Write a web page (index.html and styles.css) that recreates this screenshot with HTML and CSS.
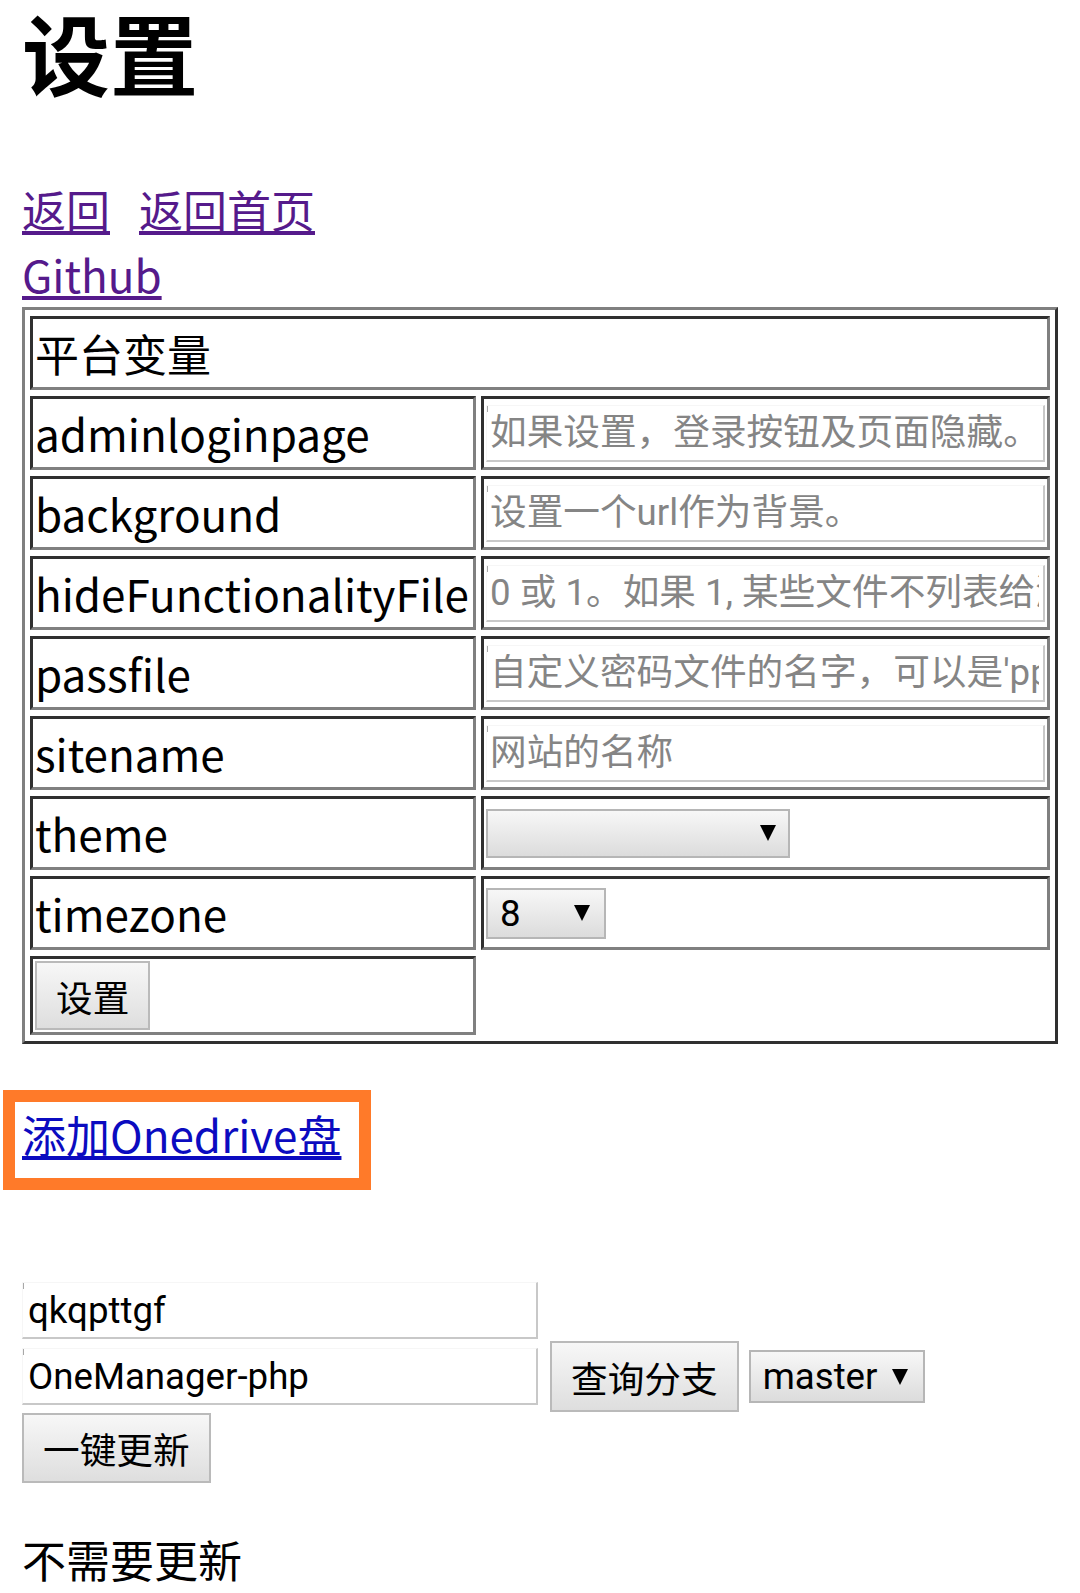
FILE: index.html
```html
<!DOCTYPE html>
<html lang="zh-CN">
<head>
<meta charset="utf-8">
<title>设置</title>
<link rel="stylesheet" href="styles.css">
</head>
<body>
<div class="content">
  <h1 class="title">设置</h1>
  <div class="nav">
    <div class="nav-line"><a class="link link-visited" href="#">返回</a><a class="link link-visited nav-gap" href="#">返回首页</a></div>
    <div class="nav-line"><a class="link link-visited" href="#">Github</a></div>
  </div>
  <table class="settings">
    <colgroup><col class="col-name"><col class="col-value"></colgroup>
    <tr><td colspan="2" class="cell">平台变量</td></tr>
    <tr><td class="cell">adminloginpage</td><td class="cell cell-value"><input class="field" type="text" placeholder="如果设置，登录按钮及页面隐藏。"></td></tr>
    <tr><td class="cell">background</td><td class="cell cell-value"><input class="field" type="text" placeholder="设置一个url作为背景。"></td></tr>
    <tr><td class="cell">hideFunctionalityFile</td><td class="cell cell-value"><input class="field" type="text" placeholder="0 或 1。如果 1, 某些文件不列表给游客。"></td></tr>
    <tr><td class="cell">passfile</td><td class="cell cell-value"><input class="field" type="text" placeholder="自定义密码文件的名字，可以是'pppppp'，也可以是'aaaa.txt'等等。"></td></tr>
    <tr><td class="cell">sitename</td><td class="cell cell-value"><input class="field" type="text" placeholder="网站的名称"></td></tr>
    <tr><td class="cell">theme</td><td class="cell cell-value"><span class="select select-theme"><select class="select-box"><option></option></select><span class="arrow"></span></span></td></tr>
    <tr><td class="cell">timezone</td><td class="cell cell-value"><span class="select select-tz"><select class="select-box"><option>8</option></select><span class="arrow"></span></span></td></tr>
    <tr><td class="cell cell-btn"><button class="btn btn-set" type="button">设置</button></td></tr>
  </table>
</div>
<div class="highlight"><a class="link link-new" href="#">添加Onedrive盘</a></div>
<div class="content">
  <form class="update">
    <div class="update-row"><input class="field field-repo" type="text" value="qkqpttgf"></div>
    <div class="update-row update-row-mid"><input class="field field-repo" type="text" value="OneManager-php"><button class="btn btn-query" type="button">查询分支</button><span class="select select-branch"><select class="select-box"><option>master</option></select><span class="arrow"></span></span></div>
    <div class="update-row update-row-last"><button class="btn btn-update" type="button">一键更新</button></div>
  </form>
  <p class="status">不需要更新</p>
</div>
</body>
</html>
```

FILE: styles.css
```css
html {
  background: #fff;
}

body {
  margin: 0;
  font-family: "Noto Sans CJK SC", sans-serif;
  font-size: 44px;
  color: #000;
}

.content {
  padding: 0 22px;
}

.title {
  font-family: "Liberation Sans", "Noto Sans CJK SC", sans-serif;
  font-size: 88px;
  line-height: 100px;
  font-weight: 700;
  margin: 9px 0 68px;
}

.nav-line {
  height: 65px;
  line-height: 65px;
  white-space: nowrap;
}

.link {
  text-decoration: underline;
}

.link-visited {
  color: #551a8b;
}

.nav-gap {
  margin-left: 29px;
}

/* settings table */
.settings {
  width: 100%;
  table-layout: fixed;
  border-collapse: separate;
  border-spacing: 5px 6px;
  border: 3px solid;
  border-color: #808080 #303030 #303030 #808080;
}

.col-name {
  width: 446px;
}

.cell {
  border: 3px solid;
  border-color: #303030 #808080 #808080 #303030;
  padding: 2px 2px;
  height: 64px;
  line-height: 64px;
  vertical-align: middle;
  white-space: nowrap;
  overflow: hidden;
}

.cell-btn {
  height: 69px;
}

.field {
  display: block;
  box-sizing: border-box;
  width: 100%;
  height: 57px;
  margin: 0;
  padding: 0 4px 0 3px;
  font-family: Roboto, "Noto Sans CJK SC", sans-serif;
  font-size: 36.67px;
  color: #000;
  border-style: solid;
  border-width: 1px 2px 2px 1px;
  border-color: #f6f6f6 #c8c8c8 #c8c8c8 #f6f6f6;
  border-radius: 0;
  outline: none;
  background: #fff linear-gradient(#a8a8a8, #a8a8a8) no-repeat 0 0 / 1px 6px;
}

.field::placeholder {
  color: #858585;
  opacity: 1;
}

/* select */
.select {
  position: relative;
  display: block;
}

.select-box {
  -webkit-appearance: none;
  appearance: none;
  display: block;
  box-sizing: border-box;
  width: 100%;
  height: 100%;
  margin: 0;
  padding: 0 0 0 12px;
  font-family: Roboto, "Noto Sans CJK SC", sans-serif;
  font-size: 36.67px;
  color: #000;
  border: 2px solid #b6b6b6;
  border-radius: 0;
  background: linear-gradient(#f7f7f7, #dcdcdc);
  outline: none;
}

.arrow {
  position: absolute;
  top: calc(50% - 8px);
  width: 0;
  height: 0;
  border-left: 8px solid transparent;
  border-right: 8px solid transparent;
  border-top: 16px solid #000;
  pointer-events: none;
}

.select-theme {
  width: 304px;
  height: 49px;
}

.select-theme .arrow {
  right: 14px;
}

.select-tz {
  width: 120px;
  height: 51px;
}

.select-tz .arrow {
  right: 16px;
}

.select-branch {
  width: 176px;
  height: 53px;
  flex: none;
  margin-left: 10px;
}

.select-branch .arrow {
  right: 17px;
}

/* buttons */
.btn {
  box-sizing: border-box;
  height: 69px;
  margin: 0;
  padding: 0 19px;
  font-family: "Noto Sans CJK SC", sans-serif;
  font-size: 36.67px;
  color: #000;
  border: 2px solid #bababa;
  border-radius: 0;
  background: linear-gradient(#f7f7f7, #dedede);
  white-space: nowrap;
}

.btn-set {
  display: block;
}

.btn-query {
  height: 71px;
  flex: none;
  margin-left: 12px;
}

.btn-update {
  height: 70px;
}

/* highlighted link */
.highlight {
  box-sizing: border-box;
  width: 368px;
  margin: 46px 0 0 3px;
  padding: 0 0 11px 7px;
  border: 12px solid #ff7a29;
  line-height: 65px;
  white-space: nowrap;
}

.link-new {
  color: #0b0bc0;
}

/* update form */
.update {
  margin: 92px 0 0;
}

.field-repo {
  width: 516px;
  flex: none;
  padding-left: 5px;
}

.update-row-mid {
  display: flex;
  align-items: center;
  margin-top: 2px;
}

.update-row-last {
  margin-top: 1px;
}

.status {
  margin: 44px 0 0;
  line-height: 64px;
}
```
